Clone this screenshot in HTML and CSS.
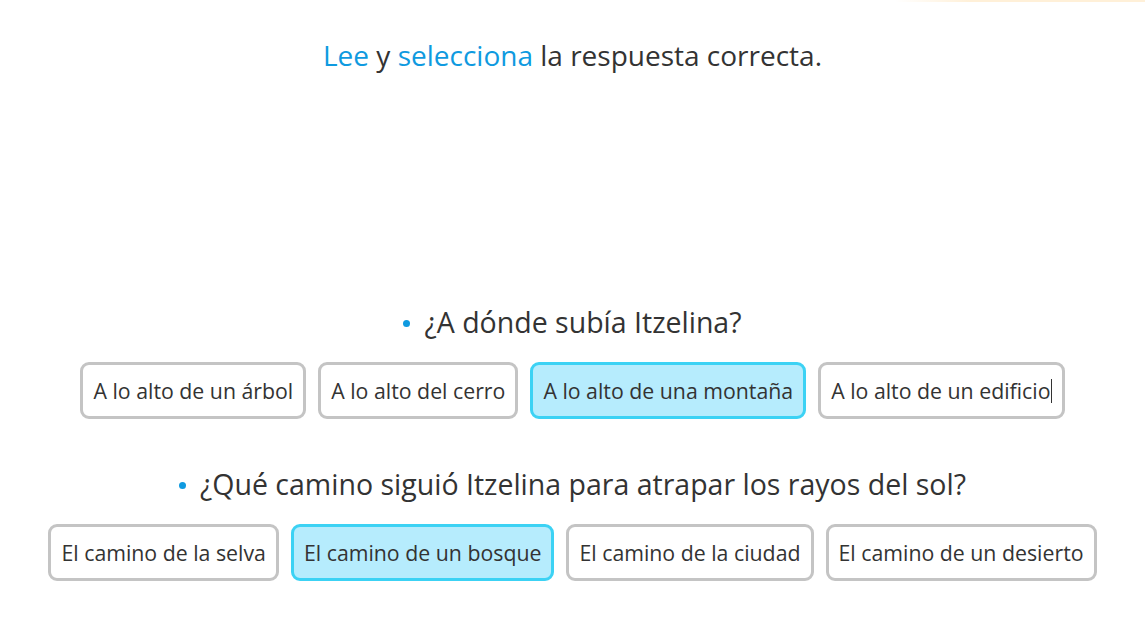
FILE: index.html
```html
<!DOCTYPE html>
<html lang="es">
<head>
<meta charset="utf-8">
<link rel="stylesheet" href="styles.css">
</head>
<body>
<div class="topline"></div>
<main class="page">
  <h1 class="title"><span class="hl">Lee</span> y <span class="hl">selecciona</span> la respuesta correcta.</h1>
  <section class="quiz">
    <div class="question">
      <p class="q"><span class="dot"></span>¿A dónde subía Itzelina?</p>
      <div class="options">
        <button class="opt">A lo alto de un árbol</button>
        <button class="opt">A lo alto del cerro</button>
        <button class="opt selected">A lo alto de una montaña</button>
        <button class="opt">A lo alto de un edificio<span class="caret"></span></button>
      </div>
    </div>
    <div class="question">
      <p class="q"><span class="dot"></span>¿Qué camino siguió Itzelina para atrapar los rayos del sol?</p>
      <div class="options">
        <button class="opt">El camino de la selva</button>
        <button class="opt selected">El camino de un bosque</button>
        <button class="opt">El camino de la ciudad</button>
        <button class="opt">El camino de un desierto</button>
      </div>
    </div>
  </section>
</main>
</body>
</html>
```

FILE: styles.css
```css
html, body {
  margin: 0;
  padding: 0;
  background: #ffffff;
}
body {
  font-family: "Open Sans", "Noto Sans", sans-serif;
  color: #333333;
  width: 1145px;
  height: 625px;
  overflow: hidden;
  position: relative;
}
.topline {
  position: absolute;
  top: 0;
  right: 0;
  width: 250px;
  height: 2px;
  background: linear-gradient(to right, rgba(255, 230, 180, 0), #fff0d8 30%, #fff0d8);
}
.page {
  display: flex;
  flex-direction: column;
  align-items: center;
}
.title {
  margin: 35px 0 0;
  font-size: 28px;
  font-weight: 400;
  line-height: 40px;
  color: #333333;
}
.hl {
  color: #0f9ae0;
}
.quiz {
  margin-top: 227px;
  display: flex;
  flex-direction: column;
  align-items: center;
  gap: 45px;
}
.question {
  display: flex;
  flex-direction: column;
  align-items: center;
}
.q {
  margin: 0 0 20px;
  font-size: 28.5px;
  line-height: 40px;
  display: flex;
  align-items: center;
}
.dot {
  width: 7px;
  height: 7px;
  border-radius: 50%;
  background: #0f9ae0;
  margin-right: 14px;
  margin-top: 2px;
}
.options {
  display: flex;
  gap: 12px;
}
.opt {
  font-family: inherit;
  font-size: 21.3px;
  color: #333333;
  background: #ffffff;
  border: 3px solid #c4c4c4;
  border-radius: 9px;
  padding: 0 10px;
  height: 57px;
  cursor: pointer;
  display: flex;
  align-items: center;
}
.opt.selected {
  background: #b6ecfd;
  border-color: #3cd2f4;
}
.caret {
  display: inline-block;
  width: 1px;
  height: 24px;
  background: #333;
}
```
